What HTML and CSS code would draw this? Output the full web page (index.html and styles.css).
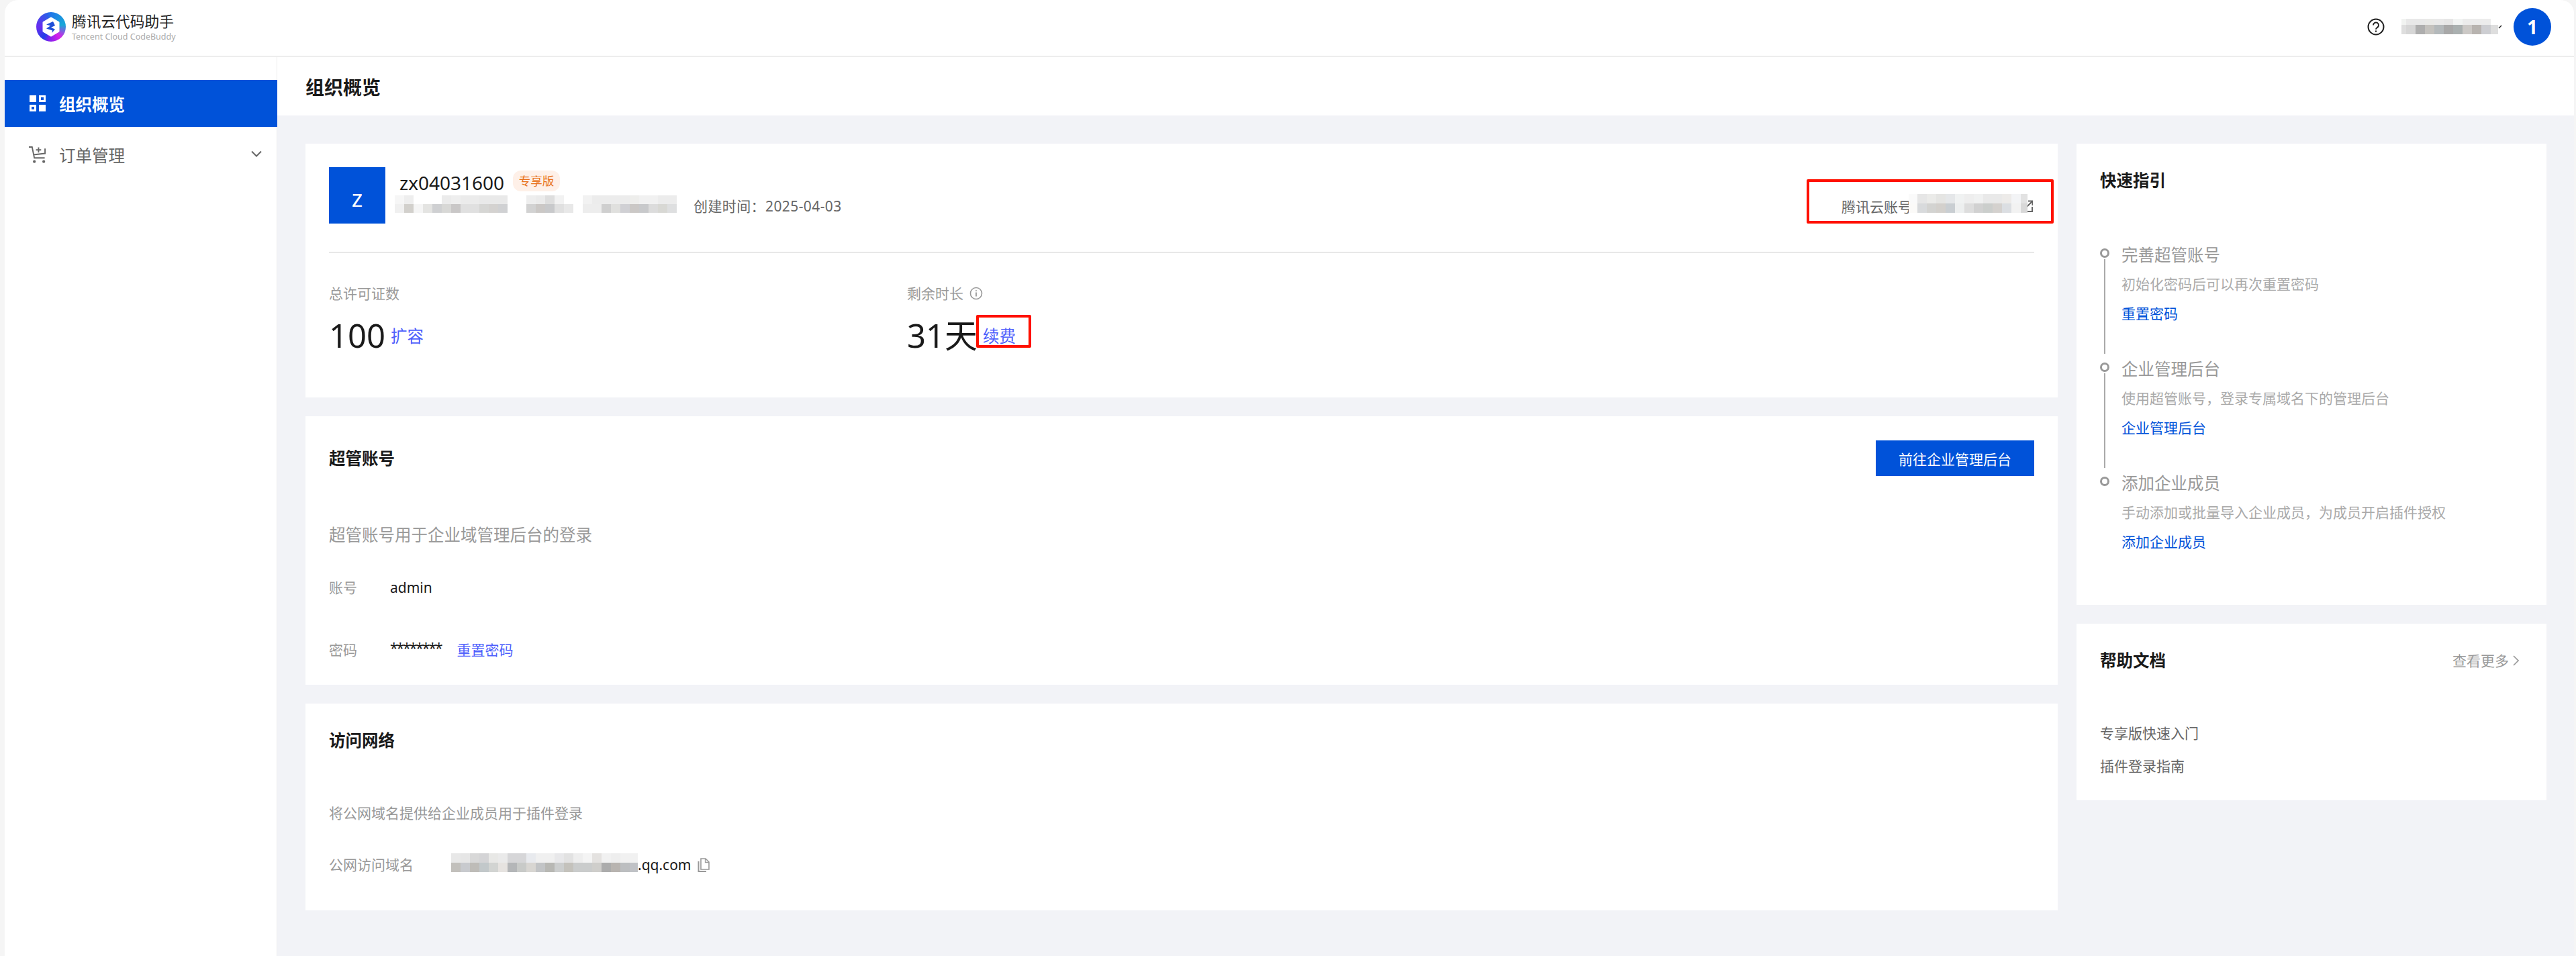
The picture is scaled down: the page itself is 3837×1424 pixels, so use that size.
FILE: index.html
```html
<!DOCTYPE html>
<html lang="zh-CN">
<head>
    <meta charset="UTF-8">
    <title>腾讯云代码助手 - 组织概览</title>
    <link rel="stylesheet" href="styles.css">
</head>
<body>
    <div class="window">
        <header class="topbar">
            <div class="brand">
                <div class="brand-logo">
                    <svg viewBox="0 0 44 44" width="44" height="44">
                        <path d="M22 9 33 15.500V28.500L22 35 11 28.500V15.500Z" fill="#fff" stroke="#fff" stroke-width="3" stroke-linejoin="round"/>
                        <path d="M15 18.500 25 14 28 20 22 23 28 25.500 23.500 31 24 27.500 15 24.500 21 20.500Z" fill="#1f4fd8"/>
                    </svg>
                </div>
                <div>
                    <div class="brand-name">腾讯云代码助手</div>
                    <div class="brand-sub">Tencent Cloud CodeBuddy</div>
                </div>
            </div>
            <div class="topbar-right">
                <svg class="help-icon" viewBox="0 0 26 26" width="26" height="26">
                    <circle cx="13" cy="13" r="11.500" fill="none" stroke="#222" stroke-width="2"/>
                    <path d="M9 10.500a4 4 0 1 1 6.200 3.300c-1.400.9-2.200 1.500-2.200 3" fill="none" stroke="#222" stroke-width="2"/>
                    <rect x="12" y="18.500" width="2" height="2.200" fill="#222"/>
                </svg>
                <div class="mosaic mosaic-user"></div>
                <svg class="user-caret" viewBox="0 0 8 8" width="8" height="8">
                    <path d="M1 6 5 2" fill="none" stroke="#222" stroke-width="1.500"/>
                </svg>
                <div class="user-avatar">1</div>
            </div>
        </header>

        <div class="layout">
            <nav class="sidebar">
                <a class="nav-item active">
                    <svg viewBox="0 0 24 24" width="24" height="24">
                        <rect x="0" y="0" width="10" height="10" fill="#fff"/>
                        <path d="M14 0h10v10H14Zm3 3v4h4V3Z" fill="#fff" fill-rule="evenodd"/>
                        <path d="M0 14h10v10H0Zm3 3v4h4v-4Z" fill="#fff" fill-rule="evenodd"/>
                        <rect x="14" y="14" width="10" height="10" fill="#fff"/>
                    </svg>
                    <span>组织概览</span>
                </a>
                <a class="nav-item">
                    <svg viewBox="0 0 28 27" width="28" height="27">
                        <path d="M1 1.500h5l3.500 17h16M8 13.500l18-2V4" fill="none" stroke="#666" stroke-width="2"/>
                        <path d="M16 2v8M12 6h8" fill="none" stroke="#666" stroke-width="2"/>
                        <circle cx="9.500" cy="24" r="2.200" fill="#666"/>
                        <circle cx="24" cy="24" r="2.200" fill="#666"/>
                    </svg>
                    <span>订单管理</span>
                    <svg class="nav-caret" viewBox="0 0 16 10" width="16" height="10">
                        <path d="M1 1.500 8 8.500 15 1.500" fill="none" stroke="#666" stroke-width="2"/>
                    </svg>
                </a>
            </nav>

            <main class="main">
                <div class="page-title">组织概览</div>
                <div class="content">
                    <div class="col-left">
                        <section class="card card-org">
                            <div class="org-top">
                                <div class="org-avatar">z</div>
                                <div class="org-info">
                                    <div class="org-name-row">
                                        <span class="org-name">zx04031600</span>
                                        <span class="badge">专享版</span>
                                    </div>
                                    <div class="org-meta">
                                        <div class="mosaic mosaic-a"></div>
                                        <div class="mosaic mosaic-b"></div>
                                        <div class="mosaic mosaic-c"></div>
                                        <span class="org-created">创建时间：2025-04-03</span>
                                    </div>
                                </div>
                                <div class="org-account">
                                    <span>腾讯云账号</span>
                                    <div class="mosaic mosaic-account"></div>
                                    <svg class="external-icon" viewBox="0 0 16 18" width="16" height="18">
                                        <path d="M7 2H1v15h14V10" fill="none" stroke="#666" stroke-width="2"/>
                                        <path d="M6 11 14.500 2.500M9 1.500h6.500V8" fill="none" stroke="#666" stroke-width="2"/>
                                    </svg>
                                </div>
                            </div>
                            <div class="divider"></div>
                            <div class="stats">
                                <div>
                                    <div class="stat-label">总许可证数</div>
                                    <div class="stat-value"><span class="stat-num">100</span><a class="link">扩容</a></div>
                                </div>
                                <div>
                                    <div class="stat-label">
                                        剩余时长
                                        <svg class="info-icon" viewBox="0 0 20 20" width="20" height="20">
                                            <circle cx="10" cy="10" r="8.500" fill="none" stroke="#999" stroke-width="1.600"/>
                                            <path d="M10 8.500v6M10 5.200v1.800" fill="none" stroke="#999" stroke-width="1.800"/>
                                        </svg>
                                    </div>
                                    <div class="stat-value"><span class="stat-num">31天</span><a class="link">续费</a></div>
                                </div>
                            </div>
                            <div class="mark mark-account"></div>
                            <div class="mark mark-renew"></div>
                        </section>

                        <section class="card card-admin">
                            <div class="card-head">
                                <h2 class="card-title">超管账号</h2>
                                <button class="primary-btn">前往企业管理后台</button>
                            </div>
                            <p class="admin-desc">超管账号用于企业域管理后台的登录</p>
                            <div class="field field-first">
                                <span class="field-label">账号</span>
                                <span class="field-value">admin</span>
                            </div>
                            <div class="field field-second">
                                <span class="field-label">密码</span>
                                <span class="field-value password">********</span>
                                <a class="link-small">重置密码</a>
                            </div>
                        </section>

                        <section class="card card-network">
                            <h2 class="card-title">访问网络</h2>
                            <p class="network-desc">将公网域名提供给企业成员用于插件登录</p>
                            <div class="field field-domain">
                                <span class="field-label">公网访问域名</span>
                                <div class="mosaic mosaic-domain"></div>
                                <span class="field-value">.qq.com</span>
                                <svg class="copy-icon" viewBox="0 0 18 21" width="18" height="21">
                                    <path d="M5 1h7l5 5v11H5Z" fill="none" stroke="#999" stroke-width="1.600"/>
                                    <path d="M11.500 1v5.500H17" fill="none" stroke="#999" stroke-width="1.300"/>
                                    <path d="M1.500 5v15H13" fill="none" stroke="#999" stroke-width="2"/>
                                </svg>
                            </div>
                        </section>
                    </div>

                    <div class="col-right">
                        <section class="card card-guide">
                            <h2 class="card-title">快速指引</h2>
                            <div class="steps">
                                <div class="step">
                                    <div class="step-rail"><i class="step-dot"></i><i class="step-line"></i></div>
                                    <div>
                                        <div class="step-title">完善超管账号</div>
                                        <div class="step-desc">初始化密码后可以再次重置密码</div>
                                        <a class="step-link">重置密码</a>
                                    </div>
                                </div>
                                <div class="step">
                                    <div class="step-rail"><i class="step-dot"></i><i class="step-line"></i></div>
                                    <div>
                                        <div class="step-title">企业管理后台</div>
                                        <div class="step-desc">使用超管账号，登录专属域名下的管理后台</div>
                                        <a class="step-link">企业管理后台</a>
                                    </div>
                                </div>
                                <div class="step">
                                    <div class="step-rail"><i class="step-dot"></i></div>
                                    <div>
                                        <div class="step-title">添加企业成员</div>
                                        <div class="step-desc">手动添加或批量导入企业成员，为成员开启插件授权</div>
                                        <a class="step-link">添加企业成员</a>
                                    </div>
                                </div>
                            </div>
                        </section>

                        <section class="card card-help">
                            <div class="help-head">
                                <h2 class="card-title">帮助文档</h2>
                                <a class="more">查看更多
                                    <svg viewBox="0 0 9 16" width="9" height="16">
                                        <path d="M1 1 8 8 1 15" fill="none" stroke="#999" stroke-width="1.600"/>
                                    </svg>
                                </a>
                            </div>
                            <a class="help-item help-item-first">专享版快速入门</a>
                            <a class="help-item">插件登录指南</a>
                        </section>
                    </div>
                </div>
            </main>
        </div>
    </div>
</body>
</html>
```

FILE: styles.css
```css
* {
    box-sizing: border-box;
}

html, body {
    margin: 0;
    height: 1424px;
    overflow: hidden;
}

body {
    font-family: "Noto Sans", "Noto Sans CJK SC", sans-serif;
    background-color: #f5f5f5;
    padding: 0 3px 0 7px;
    color: #1a1a1a;
}

h2, p {
    margin: 0;
}

.window {
    height: 1424px;
    background-color: #fff;
    border-radius: 20px 20px 0 0;
    overflow: hidden;
}

/* top bar */
.topbar {
    height: 85px;
    padding: 0 34px 4px 47px;
    display: flex;
    align-items: center;
    justify-content: space-between;
    border-bottom: 2px solid #ededed;
}

.brand {
    display: flex;
    align-items: center;
    gap: 9px;
}

.brand-logo {
    width: 44px;
    height: 44px;
    border-radius: 50%;
    background: conic-gradient(from 0deg, #1f78e8, #18a8d8 80deg, #d81fe8 140deg, #7a24ee 190deg, #2440e8 215deg, #6a2cf0 270deg, #2f5ce8 340deg, #1f78e8);
}

.brand-logo svg {
    display: block;
}

.brand-name {
    font-size: 21.700px;
    line-height: 30px;
    color: #222;
}

.brand-sub {
    font-size: 12.500px;
    line-height: 16px;
    color: #aaa;
    white-space: nowrap;
}

.topbar-right {
    display: flex;
    align-items: center;
}

.mosaic-user {
    width: 144px;
    height: 23px;
    margin-left: 25px;
    background:
        linear-gradient(90deg, #f1f3f1 0 7px, #e8e8e8 7px 35px, #e9e9e7 35px 49px, #e9e9e9 49px 63px, #e6e6e6 63px 77px, #f2f4f3 77px 91px, #ececec 91px 119px, #ececec 119px 133px, #fff 133px) top / 100% 9px no-repeat,
        linear-gradient(90deg, #dedede 0 7px, #d6d6d6 7px 21px, #aeaeae 21px 35px, #c4c2be 35px 49px, #b4b9bb 49px 63px, #a8a8a8 63px 77px, #aab0b0 77px 91px, #ccc9c6 91px 105px, #b8b4b0 105px 119px, #cdced2 119px 133px, #dedede 133px) bottom / 100% 14px no-repeat;
}

.user-caret {
    margin-right: 15px;
}

.user-avatar {
    width: 56px;
    height: 56px;
    border-radius: 50%;
    background-color: #0052d9;
    color: #fff;
    font-size: 28px;
    font-weight: 700;
    line-height: 56px;
    text-align: center;
}

/* layout */
.layout {
    display: flex;
    height: 1339px;
}

.sidebar {
    width: 406px;
    flex-shrink: 0;
    padding-top: 34px;
    border-right: 1px solid #ececec;
    display: flex;
    flex-direction: column;
    gap: 6px;
}

.nav-item {
    height: 70px;
    padding-left: 37px;
    display: flex;
    align-items: center;
    gap: 17px;
    font-size: 24.500px;
    color: #666;
    margin-right: -1px;
}

.nav-item.active {
    background-color: #0052d9;
    color: #fff;
    font-weight: 700;
}

.nav-item svg:first-child {
    width: 27px;
    margin-left: -2px;
    margin-right: 2px;
    flex-shrink: 0;
}

.nav-item.active svg:first-child {
    width: 24px;
    margin-left: 0;
    margin-right: 3px;
}

.nav-caret {
    margin-left: auto;
    margin-right: 23px;
    margin-top: -2px;
}

.main {
    flex: 1;
    min-width: 0;
    background-color: #f2f3f7;
}

.page-title {
    height: 87px;
    padding: 3px 0 0 42px;
    background-color: #fff;
    font-size: 28px;
    font-weight: 700;
    line-height: 84px;
}

.content {
    padding: 42px 41px 0 42px;
    display: grid;
    grid-template-columns: 2610px 700px;
    gap: 28px;
}

.col-left, .col-right {
    display: flex;
    flex-direction: column;
    gap: 28px;
}

.card {
    position: relative;
    background-color: #fff;
    padding: 35px;
}

.card-title {
    font-size: 24.500px;
    font-weight: 700;
    line-height: 40px;
}

/* organisation card */
.card-org {
    padding-bottom: 63px;
}

.org-top {
    display: flex;
}

.org-avatar {
    width: 84px;
    height: 84px;
    background-color: #0052d9;
    color: #fff;
    font-size: 35px;
    line-height: 92px;
    text-align: center;
}

.org-info {
    margin-left: 14px;
    padding-top: 5px;
}

.org-name-row {
    height: 37px;
    padding-left: 7px;
    display: flex;
    align-items: flex-start;
}

.org-name {
    font-size: 28px;
    line-height: 36px;
}

.badge {
    margin-left: 13px;
    width: 70px;
    height: 31px;
    border-radius: 12px;
    background-color: #fef0e8;
    color: #e8721c;
    font-size: 17.500px;
    line-height: 31px;
    text-align: center;
}

.org-meta {
    display: flex;
    align-items: flex-start;
}

.mosaic {
    flex-shrink: 0;
}

.mosaic-a {
    width: 168px;
    height: 26px;
    background:
        linear-gradient(90deg, #f6f6f6 0 14px, #eeeeee 14px 28px, #fff 28px 70px, #ebebeb 70px 84px, #eeeeee 84px 98px, #ebebeb 98px 126px, #e9e9e9 126px) top / 100% 13px no-repeat,
        linear-gradient(90deg, #f0f0f0 0 14px, #d2d0cc 14px 28px, #f5f5f5 28px 42px, #e4e4e2 42px 56px, #cfd0d2 56px 70px, #d8d8d6 70px 84px, #c9c7c7 84px 98px, #e0e0e0 98px 126px, #d6d6d4 126px 140px, #d4d2d0 140px 154px, #d0d1d3 154px) bottom / 100% 13px no-repeat;
}

.mosaic-b {
    width: 70px;
    height: 26px;
    margin-left: 28px;
    background:
        linear-gradient(90deg, #eeeeee 0 14px, #ebebeb 14px 28px, #dedede 28px 42px, #f2f2f2 42px 56px, #fff 56px) top / 100% 13px no-repeat,
        linear-gradient(90deg, #d2d2d2 0 14px, #cbc8c6 14px 28px, #c8c9cb 28px 42px, #e0e0e0 42px 56px, #e8e8e8 56px) bottom / 100% 13px no-repeat;
}

.mosaic-c {
    width: 140px;
    height: 26px;
    margin-left: 14px;
    background:
        linear-gradient(90deg, #f2f2f2 0 14px, #ececec 14px 70px, #eeeeec 70px 84px, #f1f1f1 84px 112px, #ececec 112px) top / 100% 13px no-repeat,
        linear-gradient(90deg, #ededed 0 28px, #cfcfcf 28px 42px, #e0e0de 42px 56px, #d0d0d4 56px 70px, #cbc8c6 70px 84px, #c8c9cb 84px 98px, #dcdcdc 98px 112px, #d8d8d4 112px 126px, #dedfe0 126px) bottom / 100% 13px no-repeat;
}

.org-created {
    margin: 1px 0 0 25px;
    font-size: 21px;
    letter-spacing: .4px;
    line-height: 30px;
    color: #666;
    white-space: nowrap;
}

.org-account {
    margin: 44px 2px 0 auto;
    height: 30px;
    display: flex;
    align-items: flex-start;
    font-size: 21px;
    line-height: 30px;
    color: #666;
}

.mosaic-account {
    width: 177px;
    height: 28px;
    margin: -4px 0 0 -5px;
    z-index: 1;
    background:
        linear-gradient(90deg, #fafafa 0 13px, #e6e6e6 13px 27px, #ebebe9 27px 41px, #e5e5e3 41px 55px, #e5e7e9 55px 69px, #f0f2f2 69px 83px, #eeeeee 83px 97px, #f0f1f1 97px 111px, #e9e9e9 111px 125px, #e9e9e9 125px 139px, #edebe9 139px 153px, #f3f4f6 153px 167px, #e2e2e2 167px) top / 100% 14px no-repeat,
        linear-gradient(90deg, #fbfaf8 0 13px, #d8dadc 13px 27px, #d3d3d1 27px 41px, #d3d0cc 41px 55px, #c9ced2 55px 69px, #edefef 69px 83px, #dddddd 83px 97px, #d1d1d1 97px 111px, #cbcecc 111px 125px, #d4d1ce 125px 139px, #dbdee2 139px 153px, #f2f2f2 153px 167px, #d8d8d8 167px) bottom / 100% 14px no-repeat;
}

.external-icon {
    margin: 5px 0 0 -8px;
}

.divider {
    height: 2px;
    margin-top: 42px;
    background-color: #e8e8e8;
}

.stats {
    margin-top: 45px;
    display: grid;
    grid-template-columns: 861px 1fr;
}

.stat-label {
    display: flex;
    align-items: center;
    gap: 9px;
    font-size: 21px;
    line-height: 30px;
    color: #999;
}

.stat-value {
    margin-top: 17px;
    height: 60px;
    display: flex;
    align-items: center;
    gap: 8px;
}

.stat-num {
    font-size: 49px;
    line-height: 60px;
}

.link {
    font-size: 24.500px;
    color: #4d5efc;
}

/* red marks drawn over the screenshot */
.mark {
    position: absolute;
    border: 4px solid #ff1000;
    border-radius: 2px;
}

.mark-account {
    right: 6px;
    top: 53px;
    width: 368px;
    height: 66px;
}

.mark-renew {
    left: 999px;
    top: 255px;
    width: 82px;
    height: 49px;
}

/* admin card */
.card-admin {
    padding-top: 36px;
    padding-bottom: 37px;
}

.card-head {
    display: flex;
    align-items: center;
    justify-content: space-between;
}

.primary-btn {
    width: 236px;
    height: 53px;
    margin-bottom: 1px;
    border: none;
    background-color: #0052d9;
    color: #fff;
    font-family: inherit;
    font-size: 21px;
}

.admin-desc {
    margin-top: 69px;
    font-size: 24.500px;
    line-height: 36px;
    color: #999;
}

.field {
    display: flex;
    align-items: center;
    height: 30px;
    font-size: 21px;
    line-height: 30px;
}

.field-first {
    margin-top: 45px;
}

.field-second {
    margin-top: 63px;
}

.field-label {
    width: 91px;
    color: #999;
}

.password {
    letter-spacing: -2px;
    margin-top: -6px;
    margin-right: 23px;
}

.link-small {
    color: #4d5efc;
}

/* network card */
.card-network {
    padding-bottom: 53px;
}

.network-desc {
    margin-top: 73px;
    font-size: 21px;
    line-height: 30px;
    color: #999;
}

.field-domain {
    margin-top: 47px;
}

.field-domain .field-label {
    width: 182px;
}

.mosaic-domain {
    width: 278px;
    height: 28px;
    margin-top: -7px;
    background:
        linear-gradient(90deg, #e8e8e8 0 14px, #e6e6e6 14px 28px, #d8d8d8 28px 42px, #d4d4d6 42px 56px, #e8e8e6 56px 70px, #eaeaea 70px 84px, #d6d6d8 84px 112px, #e8eaee 112px 126px, #f0f0f0 126px 154px, #e8e8ea 154px 168px, #e2e2e2 168px 182px, #eeeeee 182px 196px, #f4f4f4 196px 210px, #e4e2e0 210px 224px, #f1f1f1 224px 238px, #eeeeee 238px 252px, #f1f1f1 252px) top / 100% 14px no-repeat,
        linear-gradient(90deg, #c2c0bc 0 14px, #c8cace 14px 28px, #bebcb8 28px 42px, #c2c8ca 42px 56px, #d2d4d2 56px 70px, #e6e3e0 70px 84px, #b4b6b8 84px 98px, #c8cac8 98px 112px, #d8d6d2 112px 126px, #c2c4c6 126px 140px, #b8b8b4 140px 154px, #cccece 154px 168px, #c4c2bc 168px 182px, #cacccc 182px 210px, #cfcecb 210px 224px, #acacac 224px 238px, #b8b4b0 238px 252px, #bcbec0 252px 266px, #c0c2c6 266px) bottom / 100% 14px no-repeat;
}

.copy-icon {
    margin-left: 9px;
}

/* right column */
.card-guide {
    padding-bottom: 28px;
}

.steps {
    margin-top: 74px;
}

.step {
    height: 170px;
    display: flex;
    gap: 18px;
}

.step-rail {
    width: 14px;
    padding: 7px 0 6px;
    display: flex;
    flex-direction: column;
    align-items: center;
}

.step-dot {
    width: 14px;
    height: 14px;
    border: 3.500px solid #999;
    border-radius: 50%;
    flex-shrink: 0;
}

.step-line {
    width: 1.500px;
    flex: 1;
    margin-top: 2px;
    background-color: #aaa;
}

.step-title {
    font-size: 24.500px;
    line-height: 34px;
    color: #999;
}

.step-desc {
    margin-top: 11px;
    font-size: 21px;
    line-height: 30px;
    color: #aaa;
}

.step-link {
    display: block;
    margin-top: 14px;
    font-size: 21px;
    line-height: 30px;
    color: #0052d9;
}

.help-head {
    display: flex;
    align-items: center;
    justify-content: space-between;
}

.more {
    margin-right: 6px;
    display: flex;
    align-items: center;
    gap: 6px;
    font-size: 21px;
    line-height: 30px;
    color: #999;
}

.help-item {
    display: block;
    margin-top: 19px;
    font-size: 21px;
    line-height: 30px;
    color: #666;
}

.help-item-first {
    margin-top: 73px;
}

.card-help {
    padding-bottom: 36px;
}
```
